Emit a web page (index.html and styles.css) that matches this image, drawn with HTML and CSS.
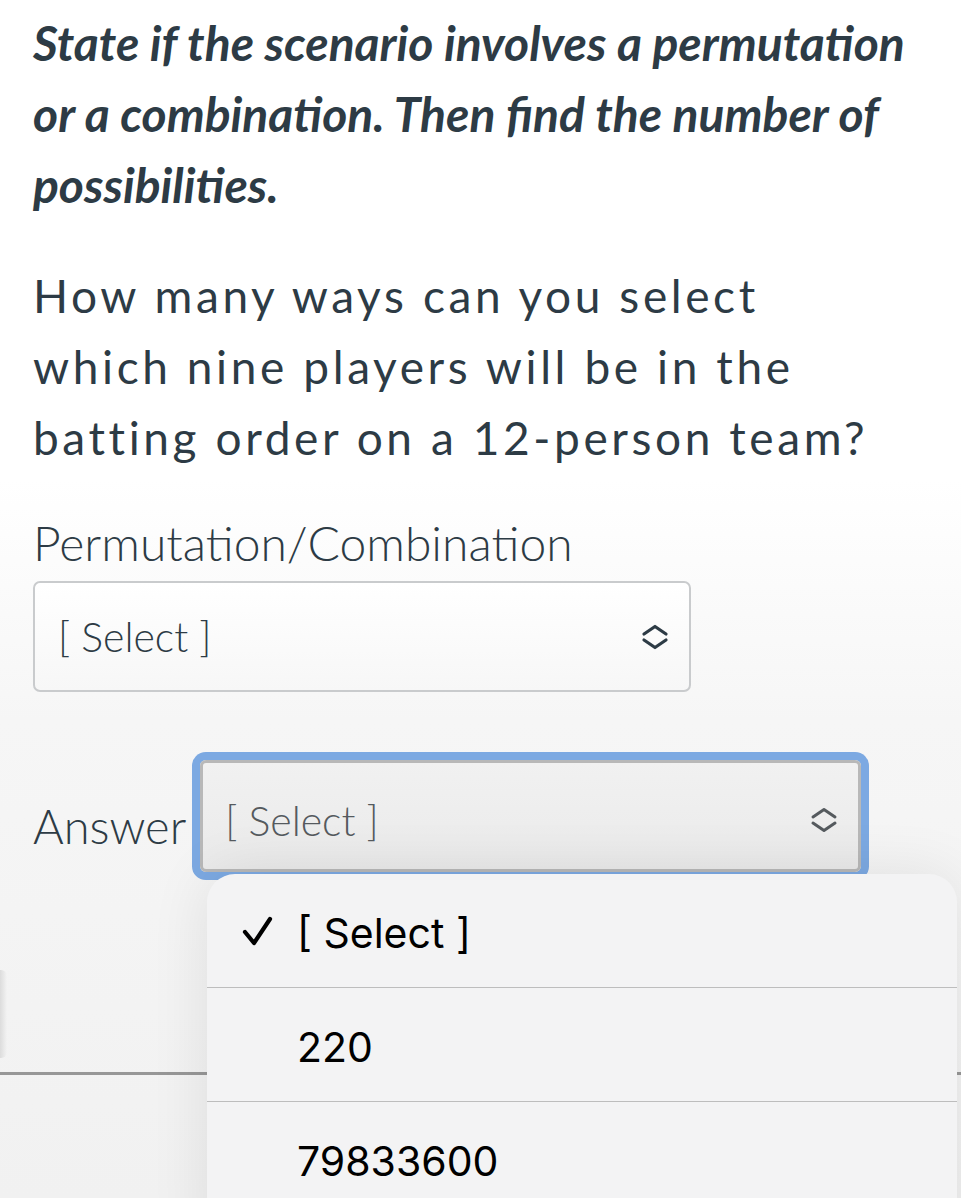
FILE: index.html
```html
<!DOCTYPE html>
<html lang="en">
<head>
<meta charset="utf-8">
<title>Quiz question</title>
<link rel="stylesheet" href="styles.css">
</head>
<body>
<main class="page">
  <h1 class="title">State if the scenario involves a permutation or a combination. Then find the number of possibilities.</h1>
  <p class="question">How many ways can you select which nine players will be in the batting order on a 12-person team?</p>

  <div class="field">
    <div class="label">Permutation/Combination</div>
    <div class="select">
      <span class="select-text">[ Select ]</span>
      <svg class="chev" width="28" height="26" viewBox="0 0 28 26"><path d="M3 10 L14 2.5 L25 10 M3 16 L14 23.5 L25 16" fill="none" stroke="currentColor" stroke-width="3.2" stroke-linecap="round" stroke-linejoin="round"/></svg>
    </div>
  </div>

  <div class="answer-row">
    <span class="answer-label">Answer</span>
    <div class="select select-focus">
      <span class="select-text">[ Select ]</span>
      <svg class="chev" width="28" height="26" viewBox="0 0 28 26"><path d="M3 10 L14 2.5 L25 10 M3 16 L14 23.5 L25 16" fill="none" stroke="currentColor" stroke-width="3" stroke-linecap="round" stroke-linejoin="round"/></svg>
    </div>
  </div>
  <div class="edge"></div>
</main>
<div class="rule"></div>

<div class="menu">
  <div class="menu-item">
    <svg class="check" width="32" height="30" viewBox="0 0 32 30"><path d="M4 16 L13 27 L29 3" fill="none" stroke="#000" stroke-width="4.2" stroke-linecap="round" stroke-linejoin="round"/></svg>
    <span>[ Select ]</span>
  </div>
  <div class="menu-item"><span>220</span></div>
  <div class="menu-item"><span>79833600</span></div>
</div>
</body>
</html>
```
FILE: styles.css
```css
html, body {
  margin: 0;
  padding: 0;
}
body {
  width: 961px;
  height: 1198px;
  overflow: hidden;
  position: relative;
  background: linear-gradient(to bottom, #ffffff 0px, #ffffff 480px, #f6f6f6 720px, #f1f1f1 1198px);
  color: #2d3b45;
  font-family: Lato, "Noto Sans", sans-serif;
}
.page {
  padding: 7px 33px 0;
}
.title {
  margin: 0;
  font-family: Lato, sans-serif;
  font-weight: 700;
  font-style: italic;
  font-size: 48px;
  line-height: 71px;
  color: #2d3b45;
}
.question {
  margin: 40px 0 0;
  max-width: 860px;
  font-size: 46px;
  line-height: 71px;
  letter-spacing: 3.6px;
  font-weight: 400;
}
.field {
  margin-top: 42px;
}
.label {
  font-size: 48px;
  font-weight: 300;
  line-height: 56px;
}
.select {
  margin-top: 10px;
  width: 658px;
  height: 111px;
  box-sizing: border-box;
  border: 2px solid #c9cbcd;
  border-radius: 7px;
  background: linear-gradient(to bottom, #ffffff, #f7f7f7);
  display: flex;
  align-items: center;
  justify-content: space-between;
  padding: 0 20px 0 23px;
}
.select-text {
  font-size: 41px;
  font-weight: 300;
  line-height: 49px;
  color: #2d3b45;
}
.chev {
  color: #2d3b45;
  display: block;
}
.answer-row {
  margin-top: 68px;
  display: flex;
  align-items: center;
}
.answer-label {
  font-size: 47px;
  font-weight: 300;
  line-height: 56px;
  margin-top: 20px;
}
.select-focus {
  margin: 0 0 0 14px;
  width: 661px;
  height: 112px;
  border: 3px solid #b8b8b8;
  border-radius: 6px;
  background: linear-gradient(to bottom, #f1f1f1, #eaeaea);
  box-shadow: 0 0 0 8px #7ca9e2;
  padding: 8px 20px 0 22px;
}
.select-focus .select-text,
.select-focus .chev {
  color: #555a5e;
}
.edge {
  margin: 98px 0 0 -33px;
  width: 7px;
  height: 88px;
  border-radius: 0 6px 6px 0;
  background: linear-gradient(to right, #dcdcdc, rgba(230,230,230,0));
}
.rule {
  margin-top: 14px;
  height: 3px;
  background: #979797;
}
.menu {
  position: absolute;
  left: 207px;
  top: 874px;
  width: 750px;
  height: 380px;
  background: #f3f3f4;
  border-radius: 28px;
  box-shadow: 0 0 60px rgba(0, 0, 0, 0.09);
  font-family: Inter, "Liberation Sans", sans-serif;
  font-size: 41px;
  color: #000;
}
.menu-item {
  height: 114px;
  display: flex;
  align-items: center;
  padding: 4px 0 0 90px;
  box-sizing: border-box;
  border-bottom: 1.5px solid #bdbdbd;
  position: relative;
}
.menu-item:last-child {
  border-bottom: none;
}
.check {
  position: absolute;
  left: 34px;
  top: 42px;
}
```
